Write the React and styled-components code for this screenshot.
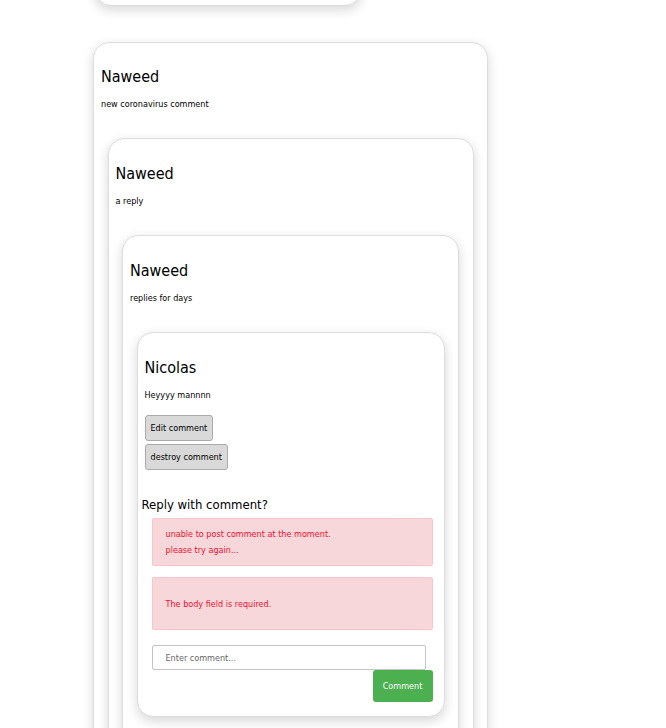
import React from 'react';
import styled, { createGlobalStyle } from 'styled-components';

const GlobalStyle = createGlobalStyle`
    html, body {
        margin: 0;
        padding: 0;
        background: #fff;
        overflow: hidden;
    }
    body {
        font-family: "DejaVu Sans Condensed", "Liberation Sans", sans-serif;
        color: #111;
    }
`;

const Page = styled.div`
    width: 666px;
    height: 728px;
    overflow: hidden;
    padding-left: 93px;
    box-sizing: border-box;
`;

const PrevCard = styled.div`
    width: 266px;
    height: 60px;
    margin: -54px 0 36px 2px;
    border: 1px solid #ddd;
    border-radius: 16px;
    box-shadow: 0 4px 12px rgba(0, 0, 0, 0.16);
    box-sizing: border-box;
    background: #fff;
`;

const Card = styled.div`
    width: ${(props) => (props.$width ? props.$width : 'auto')};
    margin: ${(props) => (props.$root ? '0' : '27px 6.5px 0')};
    padding: ${(props) => (props.$root ? '22px' : '23px')} 7px ${(props) => props.$bottom || '60px'};
    border: 1px solid #ddd;
    border-radius: 16px;
    box-shadow: 0 4px 12px rgba(0, 0, 0, 0.16);
    box-sizing: border-box;
    background: #fff;
`;

const Author = styled.h3`
    margin: 0;
    font-size: 16px;
    line-height: 24px;
    font-weight: 400;
    color: #000;
`;

const Body = styled.p`
    margin: 8px 0 0;
    font-size: 9px;
    line-height: 14px;
    color: #000;
`;

const Actions = styled.div`
    display: flex;
    flex-direction: column;
    align-items: flex-start;
    gap: 3px;
    margin-top: 13px;
`;

const GreyButton = styled.button`
    height: 26px;
    padding: 0 5px;
    font-family: inherit;
    font-size: 9px;
    color: #000;
    background: #d9d9d9;
    border: 1px solid #aaa;
    border-radius: 3px;
    cursor: pointer;
`;

const ReplyForm = styled.form`
    margin-top: 25px;
    display: flex;
    flex-direction: column;
`;

const ReplyTitle = styled.h4`
    margin: 0 0 3px -3px;
    font-size: 13px;
    line-height: 20px;
    font-weight: 400;
    color: #000;
`;

const ErrorBox = styled.div`
    width: 281px;
    min-height: ${(props) => props.$minHeight || '0'};
    margin: ${(props) => props.$gap || '0'} 0 0 7px;
    padding: 7px 13px;
    display: flex;
    flex-direction: column;
    justify-content: center;
    background: #f8d7da;
    border: 1px solid #f5c6cb;
    border-radius: 2px;
    box-sizing: border-box;
    color: #ee1133;
    font-size: 9px;
    line-height: 16px;
`;

const Input = styled.input`
    width: 274px;
    height: 25px;
    margin: 15px 0 0 7px;
    padding: 0 13px;
    border: 1px solid #c4c4c4;
    border-radius: 2px;
    box-sizing: border-box;
    font-family: inherit;
    font-size: 9px;
    color: #333;
    &::placeholder {
        color: #666;
    }
`;

const SubmitRow = styled.div`
    display: flex;
    justify-content: flex-end;
    width: 281px;
    margin-left: 7px;
`;

const SubmitButton = styled.button`
    width: 60px;
    height: 32px;
    font-family: inherit;
    font-size: 9px;
    color: #fff;
    background: #4caf50;
    border: none;
    border-radius: 3px;
    cursor: pointer;
`;

const App = () => {
    return (
        <>
            <GlobalStyle />
            <Page>
                <PrevCard />
                <Card $root $width="395px">
                    <Author>Naweed</Author>
                    <Body>new coronavirus comment</Body>
                    <Card>
                        <Author>Naweed</Author>
                        <Body>a reply</Body>
                        <Card>
                            <Author>Naweed</Author>
                            <Body>replies for days</Body>
                            <Card $bottom="14px">
                                <Author>Nicolas</Author>
                                <Body>Heyyyy mannnn</Body>
                                <Actions>
                                    <GreyButton type="button">Edit comment</GreyButton>
                                    <GreyButton type="button">destroy comment</GreyButton>
                                </Actions>
                                <ReplyForm onSubmit={(e) => e.preventDefault()}>
                                    <ReplyTitle>Reply with comment?</ReplyTitle>
                                    <ErrorBox>
                                        <span>unable to post comment at the moment.</span>
                                        <span>please try again...</span>
                                    </ErrorBox>
                                    <ErrorBox $gap="11px" $minHeight="53px">
                                        <span>The body field is required.</span>
                                    </ErrorBox>
                                    <Input placeholder="Enter comment..." />
                                    <SubmitRow>
                                        <SubmitButton type="submit">Comment</SubmitButton>
                                    </SubmitRow>
                                </ReplyForm>
                            </Card>
                        </Card>
                    </Card>
                </Card>
            </Page>
        </>
    );
};

export default App;
